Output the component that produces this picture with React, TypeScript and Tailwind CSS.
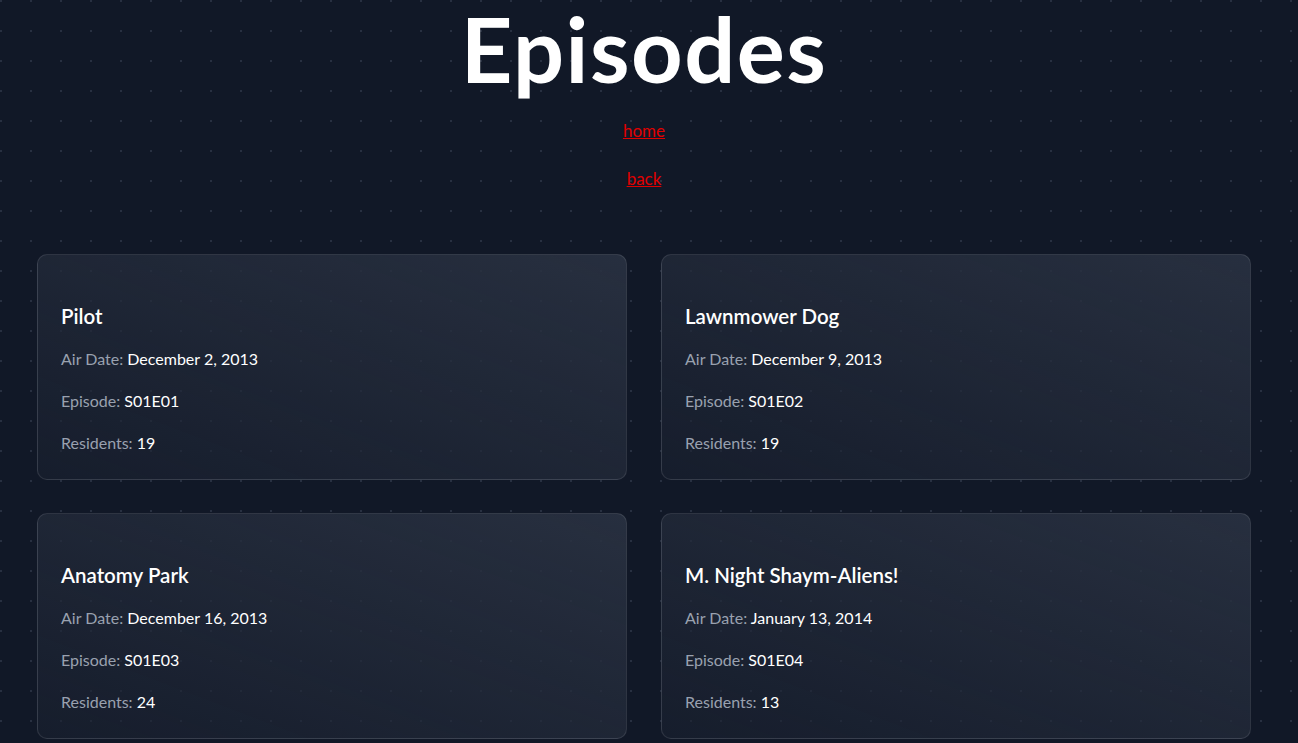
const episodes = [
  { name: "Pilot", air: "December 2, 2013", code: "S01E01", residents: 19 },
  { name: "Lawnmower Dog", air: "December 9, 2013", code: "S01E02", residents: 19 },
  { name: "Anatomy Park", air: "December 16, 2013", code: "S01E03", residents: 24 },
  { name: "M. Night Shaym-Aliens!", air: "January 13, 2014", code: "S01E04", residents: 13 },
];

const EpisodeCard = ({ ep }: { ep: (typeof episodes)[number] }) => {
  return (
    <div className="rounded-[10px] border border-white/10 bg-gradient-to-bl from-[#2a3242]/90 to-[#1a2130]/60 px-[23px] pt-[47px] pb-[24px]">
      <h2 className="text-[20.5px] leading-[28px] font-semibold text-white">{ep.name}</h2>
      <p className="mt-[17px] text-[16px] leading-[24px] text-gray-400">
        Air Date: <span className="text-white">{ep.air}</span>
      </p>
      <p className="mt-[18px] text-[16px] leading-[24px] text-gray-400">
        Episode: <span className="text-white">{ep.code}</span>
      </p>
      <p className="mt-[18px] text-[16px] leading-[24px] text-gray-400">
        Residents: <span className="text-white">{ep.residents}</span>
      </p>
    </div>
  );
};

export default function App() {
  return (
    <div className="min-h-screen bg-[#111827] bg-[radial-gradient(circle_at_1px_1px,#283041_1px,transparent_0)] bg-[size:30px_30px] pr-[10px] font-['Lato','Liberation_Sans',sans-serif]">
      <div className="flex flex-col items-center">
        <h1 className="pt-[3px] text-[90px] leading-none font-bold tracking-[1.5px] text-white">Episodes</h1>
        <a href="#" className="mt-[26px] text-[17px] leading-[24px] text-[#e00000] underline">
          home
        </a>
        <a href="#" className="mt-[24px] text-[17px] leading-[24px] text-[#e00000] underline">
          back
        </a>
      </div>
      <div className="mt-[63px] grid grid-cols-[590px_590px] justify-center gap-x-[34px] gap-y-[33px]">
        {episodes.map((ep) => (
          <EpisodeCard key={ep.code} ep={ep} />
        ))}
      </div>
    </div>
  );
}
